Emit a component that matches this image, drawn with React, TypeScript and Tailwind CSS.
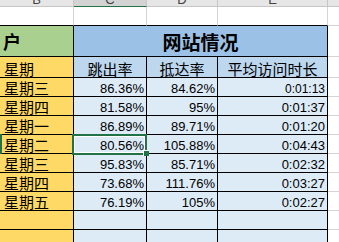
const cjk = { fontFamily: '"Noto Sans CJK SC", "Liberation Sans", sans-serif' };

type Row = { day: string; bounce: string; reach: string; time: string; small?: boolean };

const rows: Row[] = [
  { day: '星期三', bounce: '86.36%', reach: '84.62%', time: '0:01:13', small: true },
  { day: '星期四', bounce: '81.58%', reach: '95%', time: '0:01:37' },
  { day: '星期一', bounce: '86.89%', reach: '89.71%', time: '0:01:20' },
  { day: '星期二', bounce: '80.56%', reach: '105.88%', time: '0:04:43' },
  { day: '星期三', bounce: '95.83%', reach: '85.71%', time: '0:02:32' },
  { day: '星期四', bounce: '73.68%', reach: '111.76%', time: '0:03:27' },
  { day: '星期五', bounce: '76.19%', reach: '105%', time: '0:02:27' },
  { day: '', bounce: '', reach: '', time: '' },
  { day: '', bounce: '', reach: '', time: '' },
];

function HeadCell({ label, className }: { label: string; className: string }) {
  return (
    <div className={`h-[7px] overflow-hidden border-r border-b border-[#c6c6c6] flex justify-center ${className}`}>
      <span className="-mt-[7px] text-[13px] leading-[13px] text-[#444]" style={{ fontFamily: '"Liberation Sans", sans-serif' }}>
        {label}
      </span>
    </div>
  );
}

export default function App() {
  return (
    <div className="relative w-[339px] h-[242px] overflow-hidden bg-white text-black">
      {/* column headers */}
      <div className="flex">
        <HeadCell label="B" className="w-[74px] bg-[#e6e6e6]" />
        <HeadCell label="C" className="w-[73px] bg-[#d3d3d3] !border-b-[#217346]" />
        <HeadCell label="D" className="w-[71px] bg-[#e6e6e6]" />
        <HeadCell label="E" className="w-[110px] bg-[#e6e6e6]" />
        <div className="flex-1 h-[7px] bg-[#e6e6e6] border-b border-[#c6c6c6]" />
      </div>

      {/* empty row */}
      <div className="flex h-[19px]">
        <div className="w-[74px] border-r border-b border-r-[#d4d4d4] border-b-black" />
        <div className="w-[73px] border-r border-b border-r-[#d4d4d4] border-b-black" />
        <div className="w-[71px] border-r border-b border-r-[#d4d4d4] border-b-black" />
        <div className="w-[110px] border-r border-b border-r-[#d4d4d4] border-b-black" />
        <div className="flex-1 border-b border-[#d4d4d4]" />
      </div>

      {/* title row */}
      <div className="flex h-[31px]" style={cjk}>
        <div className="w-[74px] bg-[#a9d08e] border-r border-b border-black flex items-center pl-[3px] text-[18px] font-bold leading-none">
          户
        </div>
        <div className="w-[254px] bg-[#9bc2e6] border-r border-b border-black flex items-center justify-center text-[19px] font-bold leading-none">
          网站情况
        </div>
        <div className="flex-1 border-b border-[#d4d4d4]" />
      </div>

      {/* label row */}
      <div className="flex h-[21px] text-[15px] leading-[15px]" style={cjk}>
        <div className="w-[74px] bg-[#ffd966] border-r border-b border-black flex items-end pl-[4px] pb-[1px]">星期</div>
        <div className="w-[73px] bg-[#bdd7ee] border-r border-b border-black flex items-end justify-center pb-[1px]">跳出率</div>
        <div className="w-[71px] bg-[#bdd7ee] border-r border-b border-black flex items-end justify-center pb-[1px]">抵达率</div>
        <div className="w-[110px] bg-[#bdd7ee] border-r border-b border-black flex items-end justify-center pb-[1px]">平均访问时长</div>
        <div className="flex-1 border-b border-[#d4d4d4]" />
      </div>

      {/* data rows */}
      {rows.map((r, i) => (
        <div key={i} className="flex h-[19px]">
          <div className="w-[74px] bg-[#ffd966] border-r border-b border-black flex items-end pl-[4px] pb-[1px] text-[15px] leading-[15px]" style={cjk}>
            {r.day}
          </div>
          <div className="w-[73px] bg-[#ddebf7] border-r border-b border-black flex items-end justify-end pr-[2px] pb-[1px] text-[13px] leading-[13px]" style={{ fontFamily: '"Liberation Sans", sans-serif' }}>
            {r.bounce}
          </div>
          <div className="w-[71px] bg-[#ddebf7] border-r border-b border-black flex items-end justify-end pr-[2px] pb-[1px] text-[13px] leading-[13px]" style={{ fontFamily: '"Liberation Sans", sans-serif' }}>
            {r.reach}
          </div>
          <div
            className={`w-[110px] bg-[#ddebf7] border-r border-b border-black flex items-end justify-end pr-[2px] pb-[1px] ${r.small ? 'text-[12px] leading-[12px]' : 'text-[13px] leading-[13px]'}`}
            style={{ fontFamily: '"Liberation Sans", sans-serif' }}
          >
            {r.time}
          </div>
          <div className="flex-1 border-b border-[#d4d4d4]" />
        </div>
      ))}

      {/* active cell */}
      <div className="absolute left-[72px] top-[134px] w-[75px] h-[21px] border-2 border-[#217346]">
        <div className="w-full h-full border border-white" />
      </div>
      <div className="absolute left-[143px] top-[150px] w-[6px] h-[6px] bg-[#217346] border-l border-t border-white" />
      <div className="absolute left-0 top-[134px] w-[2px] h-[20px] bg-[#217346]" />
    </div>
  );
}
